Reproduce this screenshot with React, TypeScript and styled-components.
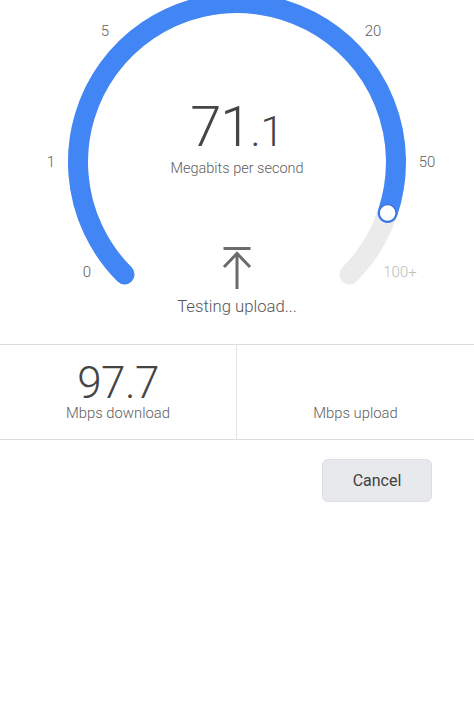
import React from "react";
import styled, { createGlobalStyle } from "styled-components";

const GlobalStyle = createGlobalStyle`
  html, body {
    margin: 0;
    padding: 0;
    background: #ffffff;
  }
  body {
    font-family: Roboto, "Liberation Sans", Arial, sans-serif;
    color: #5f6368;
    overflow: hidden;
  }
`;

const Page = styled.div`
  width: 474px;
  height: 720px;
  display: flex;
  flex-direction: column;
  background: #ffffff;
`;

const GaugeSection = styled.section`
  position: relative;
  height: 344px;
  display: flex;
  flex-direction: column;
  align-items: center;
`;

const GaugeSvg = styled.svg`
  position: absolute;
  top: 0;
  left: 0;
  width: 474px;
  height: 344px;
`;

const Tick = styled.text<{ $muted?: boolean }>`
  font-family: Roboto, "Liberation Sans", Arial, sans-serif;
  font-size: 15px;
  font-weight: 300;
  fill: ${(p) => (p.$muted ? "#bdbdbd" : "#5e5e5e")};
`;

const Readout = styled.div`
  position: relative;
  display: flex;
  flex-direction: column;
  align-items: center;
  padding-top: 99px;
`;

const Value = styled.div`
  font-size: 56px;
  font-weight: 300;
  line-height: 1;
  height: 56px;
  color: #454545;
  letter-spacing: -1px;
`;

const Fraction = styled.span`
  font-size: 42px;
  letter-spacing: 0;
`;

const Unit = styled.div`
  margin-top: 5px;
  font-size: 14.5px;
  font-weight: 300;
  line-height: 18px;
  color: #5e5e5e;
`;

const UploadIcon = styled.svg`
  margin-top: 68px;
  width: 30px;
  height: 44px;
`;

const Status = styled.div`
  margin-top: 7px;
  font-size: 16.7px;
  font-weight: 300;
  line-height: 20px;
  color: #555555;
`;

const Results = styled.div`
  display: grid;
  grid-template-columns: 1fr 1fr;
  height: 94px;
  border-top: 1px solid #dcdcdc;
  border-bottom: 1px solid #dcdcdc;
`;

const ResultCell = styled.div<{ $divider?: boolean }>`
  display: flex;
  flex-direction: column;
  align-items: center;
  justify-content: flex-end;
  padding-bottom: 17px;
  border-right: ${(p) => (p.$divider ? "1px solid #e4e4e4" : "none")};
`;

const ResultValue = styled.div`
  font-size: 44px;
  font-weight: 300;
  line-height: 38px;
  color: #454545;
  letter-spacing: -0.5px;
`;

const ResultLabel = styled.div`
  margin-top: 2px;
  font-size: 14.8px;
  font-weight: 300;
  line-height: 18px;
  color: #5e5e5e;
`;

const Actions = styled.div`
  display: flex;
  justify-content: flex-end;
  padding: 19px 42px 0 0;
`;

const CancelButton = styled.button`
  width: 110px;
  height: 43px;
  border-radius: 6px;
  border: 1px solid #dedfe2;
  background: #e8e9ec;
  font-family: Roboto, "Liberation Sans", Arial, sans-serif;
  font-size: 16px;
  color: #404040;
  padding: 0;
  cursor: pointer;
`;

const CX = 237;
const CY = 162;
const R = 159;

const pt = (deg: number) => {
  const a = (deg * Math.PI) / 180;
  return [CX + R * Math.cos(a), CY + R * Math.sin(a)];
};

const arcPath = (from: number, to: number) => {
  const [x1, y1] = pt(from);
  const [x2, y2] = pt(to);
  const large = to - from > 180 ? 1 : 0;
  return `M ${x1.toFixed(2)} ${y1.toFixed(2)} A ${R} ${R} 0 ${large} 1 ${x2.toFixed(2)} ${y2.toFixed(2)}`;
};

const progress = 0.9026;
const endAngle = 135 + 270 * progress;
const [kx, ky] = pt(endAngle);

export default function App() {
  return (
    <>
      <GlobalStyle />
      <Page>
        <GaugeSection>
          <GaugeSvg viewBox="0 0 474 344">
            <path d={arcPath(135, 405)} fill="none" stroke="#ebebeb" strokeWidth={20} strokeLinecap="round" />
            <path d={arcPath(135, endAngle)} fill="none" stroke="#4285f4" strokeWidth={20} strokeLinecap="round" />
            <circle cx={kx} cy={ky} r={8.5} fill="#ffffff" stroke="#3b74d8" strokeWidth={1.5} />
            <Tick x={105} y={36} textAnchor="middle">5</Tick>
            <Tick x={373} y={36} textAnchor="middle">20</Tick>
            <Tick x={51} y={167} textAnchor="middle">1</Tick>
            <Tick x={427} y={167} textAnchor="middle">50</Tick>
            <Tick x={87} y={277} textAnchor="middle">0</Tick>
            <Tick x={400} y={277} textAnchor="middle" $muted>100+</Tick>
          </GaugeSvg>
          <Readout>
            <Value>
              71<Fraction>.1</Fraction>
            </Value>
            <Unit>Megabits per second</Unit>
            <UploadIcon viewBox="0 0 30 44">
              <line x1="1.5" y1="2.5" x2="28.5" y2="2.5" stroke="#6b6b6b" strokeWidth="3" />
              <line x1="15" y1="8" x2="15" y2="43" stroke="#6b6b6b" strokeWidth="3" />
              <polyline points="2,21 15,7.5 28,21" fill="none" stroke="#6b6b6b" strokeWidth="3" />
            </UploadIcon>
            <Status>Testing upload...</Status>
          </Readout>
        </GaugeSection>
        <Results>
          <ResultCell $divider>
            <ResultValue>97.7</ResultValue>
            <ResultLabel>Mbps download</ResultLabel>
          </ResultCell>
          <ResultCell>
            <ResultLabel>Mbps upload</ResultLabel>
          </ResultCell>
        </Results>
        <Actions>
          <CancelButton>Cancel</CancelButton>
        </Actions>
      </Page>
    </>
  );
}
